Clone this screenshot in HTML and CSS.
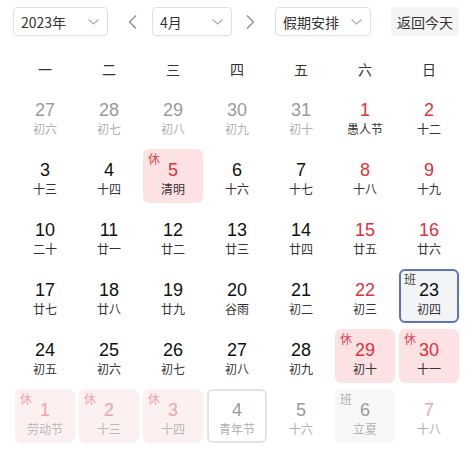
FILE: index.html
```html
<!DOCTYPE html>
<html lang="zh-CN">
<head>
<meta charset="utf-8">
<link rel="stylesheet" href="styles.css">
</head>
<body>
<div class="toolbar">
  <div class="select sel-year"><span>2023年</span><svg class="chev" width="11" height="6" viewBox="0 0 11 6"><polyline points="0.5,0.5 5.5,5 10.5,0.5" fill="none" stroke="#a8abb2" stroke-width="1.1"/></svg></div>
  <div class="arrow arrow-prev"><svg width="9" height="14" viewBox="0 0 9 14"><polyline points="8,0.5 1.5,7 8,13.5" fill="none" stroke="#8a8d94" stroke-width="1.3"/></svg></div>
  <div class="select sel-month"><span>4月</span><svg class="chev" width="11" height="6" viewBox="0 0 11 6"><polyline points="0.5,0.5 5.5,5 10.5,0.5" fill="none" stroke="#a8abb2" stroke-width="1.1"/></svg></div>
  <div class="arrow arrow-next"><svg width="9" height="14" viewBox="0 0 9 14"><polyline points="1,0.5 7.5,7 1,13.5" fill="none" stroke="#8a8d94" stroke-width="1.3"/></svg></div>
  <div class="select sel-holiday"><span>假期安排</span><svg class="chev" width="11" height="6" viewBox="0 0 11 6"><polyline points="0.5,0.5 5.5,5 10.5,0.5" fill="none" stroke="#a8abb2" stroke-width="1.1"/></svg></div>
  <div class="btn-today">返回今天</div>
</div>

<div class="calendar">
  <div class="week">
    <div>一</div><div>二</div><div>三</div><div>四</div><div>五</div><div>六</div><div>日</div>
  </div>
  <div class="days">
    <div class="cell other"><div class="num">27</div><div class="lunar">初六</div></div>
    <div class="cell other"><div class="num">28</div><div class="lunar">初七</div></div>
    <div class="cell other"><div class="num">29</div><div class="lunar">初八</div></div>
    <div class="cell other"><div class="num">30</div><div class="lunar">初九</div></div>
    <div class="cell other"><div class="num">31</div><div class="lunar">初十</div></div>
    <div class="cell weekend"><div class="num">1</div><div class="lunar">愚人节</div></div>
    <div class="cell weekend"><div class="num">2</div><div class="lunar">十二</div></div>

    <div class="cell"><div class="num">3</div><div class="lunar">十三</div></div>
    <div class="cell"><div class="num">4</div><div class="lunar">十四</div></div>
    <div class="cell rest"><span class="badge">休</span><div class="num">5</div><div class="lunar">清明</div></div>
    <div class="cell"><div class="num">6</div><div class="lunar">十六</div></div>
    <div class="cell"><div class="num">7</div><div class="lunar">十七</div></div>
    <div class="cell weekend"><div class="num">8</div><div class="lunar">十八</div></div>
    <div class="cell weekend"><div class="num">9</div><div class="lunar">十九</div></div>

    <div class="cell"><div class="num">10</div><div class="lunar">二十</div></div>
    <div class="cell"><div class="num">11</div><div class="lunar">廿一</div></div>
    <div class="cell"><div class="num">12</div><div class="lunar">廿二</div></div>
    <div class="cell"><div class="num">13</div><div class="lunar">廿三</div></div>
    <div class="cell"><div class="num">14</div><div class="lunar">廿四</div></div>
    <div class="cell weekend"><div class="num">15</div><div class="lunar">廿五</div></div>
    <div class="cell weekend"><div class="num">16</div><div class="lunar">廿六</div></div>

    <div class="cell"><div class="num">17</div><div class="lunar">廿七</div></div>
    <div class="cell"><div class="num">18</div><div class="lunar">廿八</div></div>
    <div class="cell"><div class="num">19</div><div class="lunar">廿九</div></div>
    <div class="cell"><div class="num">20</div><div class="lunar">谷雨</div></div>
    <div class="cell"><div class="num">21</div><div class="lunar">初二</div></div>
    <div class="cell weekend"><div class="num">22</div><div class="lunar">初三</div></div>
    <div class="cell work selected"><span class="badge">班</span><div class="num">23</div><div class="lunar">初四</div></div>

    <div class="cell"><div class="num">24</div><div class="lunar">初五</div></div>
    <div class="cell"><div class="num">25</div><div class="lunar">初六</div></div>
    <div class="cell"><div class="num">26</div><div class="lunar">初七</div></div>
    <div class="cell"><div class="num">27</div><div class="lunar">初八</div></div>
    <div class="cell"><div class="num">28</div><div class="lunar">初九</div></div>
    <div class="cell rest"><span class="badge">休</span><div class="num">29</div><div class="lunar">初十</div></div>
    <div class="cell rest"><span class="badge">休</span><div class="num">30</div><div class="lunar">十一</div></div>

    <div class="cell other rest"><span class="badge">休</span><div class="num">1</div><div class="lunar">劳动节</div></div>
    <div class="cell other rest"><span class="badge">休</span><div class="num">2</div><div class="lunar">十三</div></div>
    <div class="cell other rest"><span class="badge">休</span><div class="num">3</div><div class="lunar">十四</div></div>
    <div class="cell other outlined"><div class="num">4</div><div class="lunar">青年节</div></div>
    <div class="cell other"><div class="num">5</div><div class="lunar">十六</div></div>
    <div class="cell other work"><span class="badge">班</span><div class="num">6</div><div class="lunar">立夏</div></div>
    <div class="cell other weekend"><div class="num">7</div><div class="lunar">十八</div></div>
  </div>
</div>
</body>
</html>
```

FILE: styles.css
```css
* { box-sizing: border-box; }

html, body {
  margin: 0;
  padding: 0;
  background: #ffffff;
}

body {
  width: 473px;
  height: 458px;
  overflow: hidden;
  font-family: "Liberation Sans", "Noto Sans CJK SC", sans-serif;
  color: #222;
}

.toolbar {
  display: flex;
  align-items: center;
  padding: 7px 0 0 13px;
  height: 36px;
}

.select {
  height: 29px;
  border: 1px solid #dcdfe6;
  border-radius: 4px;
  display: flex;
  align-items: center;
  justify-content: space-between;
  padding: 0 8px 0 7px;
  font-family: "Noto Sans CJK SC", sans-serif;
  font-size: 14px;
  color: #333;
  background: #fff;
}

.select .chev { flex: none; }

.sel-year { width: 95px; }
.sel-month { width: 80px; margin-left: 15px; }
.sel-holiday { width: 96px; margin-left: 20px; }

.arrow {
  width: 9px;
  height: 14px;
  display: flex;
}
.arrow-prev { margin-left: 20px; }
.arrow-next { margin-left: 14px; }

.btn-today {
  margin-left: 20px;
  width: 68px;
  height: 29px;
  border-radius: 4px;
  background: #f4f4f5;
  font-family: "Noto Sans CJK SC", sans-serif;
  font-size: 14px;
  color: #333;
  display: flex;
  align-items: center;
  justify-content: center;
}

.calendar {
  margin-left: 13px;
  width: 448px;
}

.week {
  display: grid;
  grid-template-columns: repeat(7, 64px);
  margin-top: 16px;
  height: 34px;
  line-height: 34px;
  font-family: "Noto Sans CJK SC", sans-serif;
  font-size: 14px;
  color: #333;
  text-align: center;
}

.days {
  display: grid;
  grid-template-columns: repeat(7, 64px);
  grid-auto-rows: 60px;
}

.cell {
  position: relative;
  margin: 3px 2px;
  border-radius: 6px;
  text-align: center;
  padding-top: 11px;
  border: 2px solid transparent;
}

.num {
  font-size: 18px;
  line-height: 20px;
  margin-top: -2px;
  color: #111;
}

.lunar {
  font-family: "Noto Sans CJK SC", sans-serif;
  font-size: 12px;
  line-height: 18px;
  color: #333;
}

.badge {
  position: absolute;
  left: 3px;
  top: 1px;
  font-family: "Noto Sans CJK SC", sans-serif;
  font-size: 12px;
  line-height: 14px;
}

.weekend .num { color: #e0303b; }

.other .num { color: #9a9a9a; }
.other .lunar { color: #b0b0b0; }

.rest { background: #fde2e3; }
.rest .num { color: #e0303b; }
.rest .badge { color: #e0454f; }

.work .badge { color: #444; }

.selected {
  background: #f3f4f6;
  border-color: #5d75b2;
}

.other.rest { background: #fdf0f1; }
.other.rest .num { color: #f0a4ab; }
.other.rest .badge { color: #f0a4ab; }
.other.rest .lunar { color: #b8b8b8; }

.other.work { background: #f7f7f8; }
.other.work .badge { color: #b0b0b0; }

.other.weekend .num { color: #f0a4ab; }

.outlined { border-color: #e3e3e3; }
```
